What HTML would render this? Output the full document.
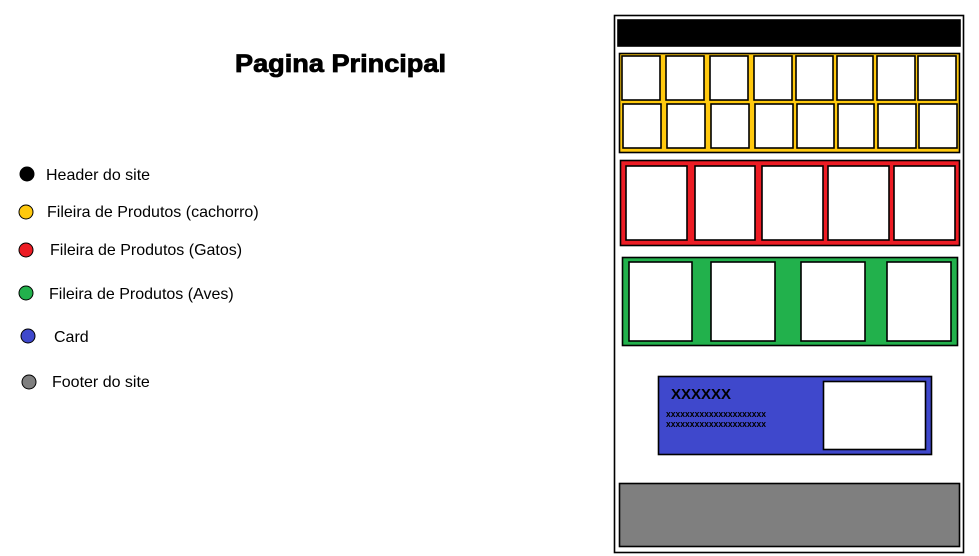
<!DOCTYPE html>
<html><head><meta charset="utf-8"><style>html,body{margin:0;padding:0;background:#fff}svg{display:block}</style></head><body>
<svg width="979" height="556" viewBox="0 0 979 556" xmlns="http://www.w3.org/2000/svg" font-family="Liberation Sans, Arial, sans-serif">
<text x="235" y="72" font-size="25" font-weight="bold" textLength="211" lengthAdjust="spacingAndGlyphs" fill="#000" stroke="#000" stroke-width="0.8">Pagina Principal</text>
<g stroke="#000" stroke-width="1">
<circle cx="27" cy="174" r="7" fill="#000"/>
<circle cx="26" cy="212" r="7" fill="#ffc90e"/>
<circle cx="26" cy="250" r="7" fill="#ed1c24"/>
<circle cx="26" cy="293" r="7" fill="#22b14c"/>
<circle cx="28" cy="336" r="7" fill="#3f48cc"/>
<circle cx="29" cy="382" r="7" fill="#7f7f7f"/>
</g>
<g font-size="16" fill="#000">
<text x="46" y="180">Header do site</text>
<text x="47" y="217">Fileira de Produtos (cachorro)</text>
<text x="50" y="255">Fileira de Produtos (Gatos)</text>
<text x="49" y="299">Fileira de Produtos (Aves)</text>
<text x="54" y="342">Card</text>
<text x="52" y="387">Footer do site</text>
</g>
<g stroke="#000" stroke-width="1.6">
<rect x="614.5" y="15.5" width="349" height="537" fill="#fff"/>
<rect x="618" y="20" width="342" height="26" fill="#000"/>
<rect x="619.5" y="53.5" width="340" height="99" fill="#ffc90e"/>
<g fill="#fff">
<rect x="622" y="56" width="38" height="44"/><rect x="666" y="56" width="38" height="44"/><rect x="710" y="56" width="38" height="44"/><rect x="754" y="56" width="38" height="44"/><rect x="796" y="56" width="37" height="44"/><rect x="837" y="56" width="36" height="44"/><rect x="877" y="56" width="38" height="44"/><rect x="918" y="56" width="38" height="44"/>
<rect x="623" y="104" width="38" height="44"/><rect x="667" y="104" width="38" height="44"/><rect x="711" y="104" width="38" height="44"/><rect x="755" y="104" width="38" height="44"/><rect x="797" y="104" width="37" height="44"/><rect x="838" y="104" width="36" height="44"/><rect x="878" y="104" width="38" height="44"/><rect x="919" y="104" width="38" height="44"/>
</g>
<rect x="620.5" y="160.5" width="339" height="85" fill="#ed1c24"/>
<g fill="#fff">
<rect x="626" y="166" width="61" height="74"/><rect x="695" y="166" width="60" height="74"/><rect x="762" y="166" width="61" height="74"/><rect x="828" y="166" width="61" height="74"/><rect x="894" y="166" width="61" height="74"/>
</g>
<rect x="622.5" y="257.5" width="335" height="88" fill="#22b14c"/>
<g fill="#fff">
<rect x="629" y="262" width="63" height="79"/><rect x="711" y="262" width="64" height="79"/><rect x="801" y="262" width="64" height="79"/><rect x="887" y="262" width="64" height="79"/>
</g>
<rect x="658.5" y="376.5" width="273" height="78" fill="#3f48cc"/>
<rect x="823.5" y="381.5" width="102" height="68" fill="#fff"/>
<rect x="619.5" y="483.5" width="340" height="63" fill="#7f7f7f"/>
</g>
<text x="671" y="399" font-size="15" font-weight="bold" fill="#000" textLength="60" lengthAdjust="spacingAndGlyphs">XXXXXX</text>
<text x="666" y="417" font-size="9" font-weight="bold" fill="#000" textLength="100" lengthAdjust="spacingAndGlyphs">xxxxxxxxxxxxxxxxxxxxx</text>
<text x="666" y="427" font-size="9" font-weight="bold" fill="#000" textLength="100" lengthAdjust="spacingAndGlyphs">xxxxxxxxxxxxxxxxxxxxx</text>
</svg>
</body></html>
